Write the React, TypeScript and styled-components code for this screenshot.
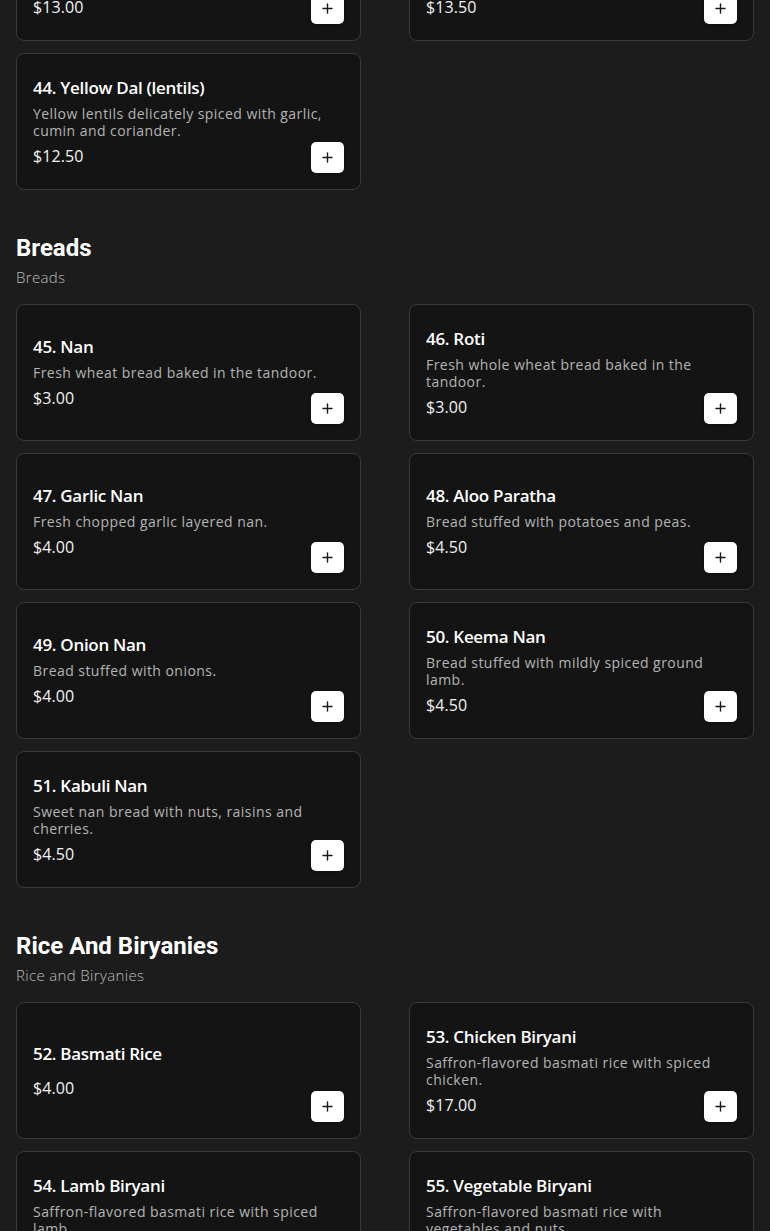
import React from 'react';
import styled, { createGlobalStyle } from 'styled-components';

type Item = { id: number; name: string; desc?: string; price: string };
type Section = { title?: string; subtitle?: string; items: Item[] };

const sections: Section[] = [
  {
    items: [
      { id: 42, name: 'Chana Masala', desc: 'Chickpeas cooked with onions, tomatoes and spices.', price: '$13.00' },
      { id: 43, name: 'Aloo Gobi', desc: 'Potatoes and cauliflower cooked with onions and spices.', price: '$13.50' },
      { id: 44, name: 'Yellow Dal (lentils)', desc: 'Yellow lentils delicately spiced with garlic, cumin and coriander.', price: '$12.50' },
    ],
  },
  {
    title: 'Breads',
    subtitle: 'Breads',
    items: [
      { id: 45, name: 'Nan', desc: 'Fresh wheat bread baked in the tandoor.', price: '$3.00' },
      { id: 46, name: 'Roti', desc: 'Fresh whole wheat bread baked in the tandoor.', price: '$3.00' },
      { id: 47, name: 'Garlic Nan', desc: 'Fresh chopped garlic layered nan.', price: '$4.00' },
      { id: 48, name: 'Aloo Paratha', desc: 'Bread stuffed with potatoes and peas.', price: '$4.50' },
      { id: 49, name: 'Onion Nan', desc: 'Bread stuffed with onions.', price: '$4.00' },
      { id: 50, name: 'Keema Nan', desc: 'Bread stuffed with mildly spiced ground lamb.', price: '$4.50' },
      { id: 51, name: 'Kabuli Nan', desc: 'Sweet nan bread with nuts, raisins and cherries.', price: '$4.50' },
    ],
  },
  {
    title: 'Rice And Biryanies',
    subtitle: 'Rice and Biryanies',
    items: [
      { id: 52, name: 'Basmati Rice', price: '$4.00' },
      { id: 53, name: 'Chicken Biryani', desc: 'Saffron-flavored basmati rice with spiced chicken.', price: '$17.00' },
      { id: 54, name: 'Lamb Biryani', desc: 'Saffron-flavored basmati rice with spiced lamb.', price: '$19.00' },
      { id: 55, name: 'Vegetable Biryani', desc: 'Saffron-flavored basmati rice with vegetables and nuts.', price: '$15.00' },
    ],
  },
];

const GlobalStyle = createGlobalStyle`
  * { box-sizing: border-box; }
  html, body {
    margin: 0;
    background: #1c1c1c;
    overflow: hidden;
  }
  body {
    font-family: "Open Sans", "Liberation Sans", sans-serif;
    color: #ffffff;
  }
`;

function PlusIcon() {
  return (
    <svg width="11" height="11" viewBox="0 0 11 11" fill="none">
      <path d="M5.5 1v9M1 5.5h9" stroke="#1a1a1a" strokeWidth="1.4" strokeLinecap="round" />
    </svg>
  );
}

export default function App() {
  return (
    <Page>
      <GlobalStyle />
      {sections.map((section, i) => (
        <MenuSection key={i} $first={i === 0}>
          {section.title && <SectionTitle>{section.title}</SectionTitle>}
          {section.subtitle && <SectionSubtitle>{section.subtitle}</SectionSubtitle>}
          <Grid>
            {section.items.map((item) => (
              <Card key={item.id}>
                <Content>
                  <ItemName>
                    {item.id}. {item.name}
                  </ItemName>
                  <ItemDesc>{item.desc}</ItemDesc>
                  <Price>{item.price}</Price>
                </Content>
                <AddButton aria-label="Add">
                  <PlusIcon />
                </AddButton>
              </Card>
            ))}
          </Grid>
        </MenuSection>
      ))}
    </Page>
  );
}

const Page = styled.div`
  padding: 0 16px 40px;
  margin-top: -96px;
`;

const MenuSection = styled.section<{ $first?: boolean }>`
  margin-top: ${(p) => (p.$first ? '0' : '44px')};
`;

const SectionTitle = styled.h2`
  margin: 0 0 6px;
  font-family: Roboto, "Liberation Sans", sans-serif;
  font-weight: 700;
  font-size: 24px;
  line-height: 28px;
  color: #ffffff;
`;

const SectionSubtitle = styled.div`
  margin-bottom: 18px;
  font-size: 15px;
  line-height: 18px;
  font-weight: 300;
  letter-spacing: 0.35px;
  color: #bcbcbc;
`;

const Grid = styled.div`
  display: grid;
  grid-template-columns: 1fr 1fr;
  column-gap: 48px;
  row-gap: 12px;
`;

const Card = styled.div`
  display: grid;
  grid-template-areas: 'stack';
  min-height: 137px;
  padding: 16px;
  background: #141414;
  border: 1px solid #3a3a3a;
  border-radius: 8px;
`;

const Content = styled.div`
  grid-area: stack;
  align-self: center;
  display: flex;
  flex-direction: column;
`;

const ItemName = styled.div`
  font-size: 17px;
  line-height: 20px;
  font-weight: 600;
  letter-spacing: -0.3px;
  color: #ffffff;
  margin-bottom: 7px;
`;

const ItemDesc = styled.div`
  font-size: 14px;
  line-height: 17px;
  letter-spacing: 0.45px;
  color: #b4b4b4;
  margin-bottom: 7px;
`;

const Price = styled.div`
  font-size: 16px;
  line-height: 20px;
  letter-spacing: 0.1px;
  color: #f2f2f2;
`;

const AddButton = styled.button`
  grid-area: stack;
  justify-self: end;
  align-self: end;
  display: flex;
  align-items: center;
  justify-content: center;
  width: 33px;
  height: 31px;
  padding: 0;
  background: #ffffff;
  border: none;
  border-radius: 5px;
  box-shadow: 0 1px 3px rgba(0, 0, 0, 0.4);
  cursor: pointer;
`;
